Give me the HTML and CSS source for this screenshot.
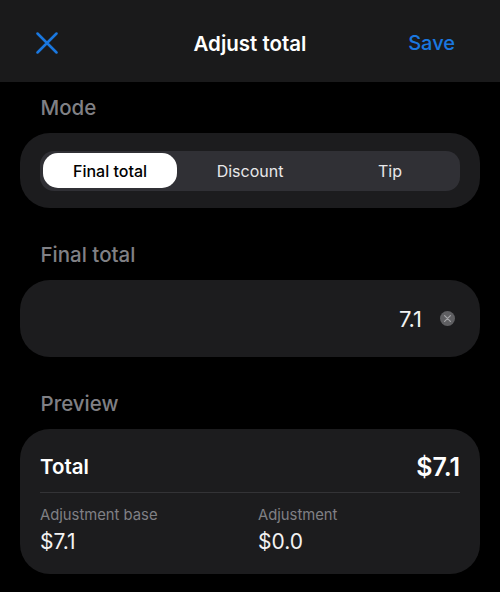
FILE: index.html
```html
<!DOCTYPE html>
<html lang="en">
<head>
    <meta charset="UTF-8">
    <meta name="viewport" content="width=device-width, initial-scale=1.0">
    <title>Adjust total</title>
    <link rel="stylesheet" href="styles.css">
</head>
<body>
    <header class="topbar">
        <svg class="close-icon" width="22" height="22" viewBox="0 0 22 22">
            <path d="M1.5 1.5 L20.5 20.5 M20.5 1.5 L1.5 20.5" fill="none" stroke="#1a78e0" stroke-width="2.5" stroke-linecap="round"/>
        </svg>
        <div class="title">Adjust total</div>
        <div class="save">Save</div>
    </header>

    <main class="content">
        <h2 class="label">Mode</h2>
        <div class="card card-mode">
            <div class="segments">
                <div class="segment active">Final total</div>
                <div class="segment">Discount</div>
                <div class="segment">Tip</div>
            </div>
        </div>

        <h2 class="label">Final total</h2>
        <div class="card card-input">
            <span class="input-value">7.1</span>
            <svg class="clear-icon" width="15" height="15" viewBox="0 0 15 15">
                <circle cx="7.5" cy="7.5" r="7.5" fill="#5f5f62"/>
                <path d="M4.6 4.6 L10.4 10.4 M10.4 4.6 L4.6 10.4" fill="none" stroke="#a5a5a8" stroke-width="1.2" stroke-linecap="round"/>
            </svg>
        </div>

        <h2 class="label">Preview</h2>
        <div class="card card-preview">
            <div class="total-row">
                <span class="total-name">Total</span>
                <span class="total-amount">$7.1</span>
            </div>
            <div class="details">
                <div class="detail">
                    <div class="detail-name">Adjustment base</div>
                    <div class="detail-value">$7.1</div>
                </div>
                <div class="detail">
                    <div class="detail-name">Adjustment</div>
                    <div class="detail-value">$0.0</div>
                </div>
            </div>
        </div>
    </main>
</body>
</html>
```

FILE: styles.css
```css
body {
    margin: 0;
    padding: 0;
    height: 592px;
    overflow: hidden;
    background-color: #000;
    color: #fff;
    font-family: Inter, "Liberation Sans", sans-serif;
}
.topbar {
    display: grid;
    grid-template-columns: 1fr auto 1fr;
    align-items: center;
    height: 82px;
    padding: 4px 45px 0 36px;
    box-sizing: border-box;
    background-color: #1a1a1b;
}
.close-icon {
    display: block;
}
.title {
    font-size: 20.5px;
    font-weight: 600;
    margin-left: 9px;
}
.save {
    justify-self: end;
    font-size: 20px;
    font-weight: 500;
    color: #1a78e0;
}
.content {
    padding: 12px 20px 0;
}
.label {
    margin: 0 0 11px 20.5px;
    font-size: 20.5px;
    line-height: 28px;
    font-weight: 500;
    color: #808085;
}
.card {
    box-sizing: border-box;
    background-color: #1c1c1e;
    margin-bottom: 33px;
}
.card-mode {
    height: 75px;
    border-radius: 30px;
    padding: 18px 20px 0;
}
.segments {
    display: grid;
    grid-template-columns: 1fr 1fr 1fr;
    height: 40px;
    border-radius: 14px;
    background-color: #303035;
}
.segment {
    display: flex;
    align-items: center;
    justify-content: center;
    font-size: 16px;
    color: #e8e8ea;
}
.segment.active {
    margin: 2px 3px 3px;
    background-color: #fff;
    color: #000;
    font-weight: 500;
    border-radius: 15px;
}
.card-input {
    display: flex;
    align-items: center;
    justify-content: flex-end;
    gap: 18px;
    height: 77px;
    border-radius: 30px;
    padding: 0 25px 0 0;
}
.input-value {
    font-size: 22px;
    color: #f2f2f2;
}
.clear-icon {
    display: block;
}
.card-preview {
    height: 145px;
    border-radius: 30px;
    padding: 0 20px;
    margin-bottom: 0;
}
.total-row {
    display: flex;
    align-items: center;
    justify-content: space-between;
    height: 64px;
    padding-top: 12px;
    box-sizing: border-box;
    border-bottom: 1px solid #333336;
}
.total-name {
    font-size: 20.5px;
    font-weight: 600;
}
.total-amount {
    font-size: 25px;
    font-weight: 600;
}
.details {
    display: grid;
    grid-template-columns: 218px 1fr;
    padding-top: 12px;
}
.detail-name {
    font-size: 14.8px;
    line-height: 20px;
    color: #808085;
}
.detail-value {
    margin-top: 3px;
    font-size: 21px;
    line-height: 28px;
    color: #f2f2f2;
}
```
